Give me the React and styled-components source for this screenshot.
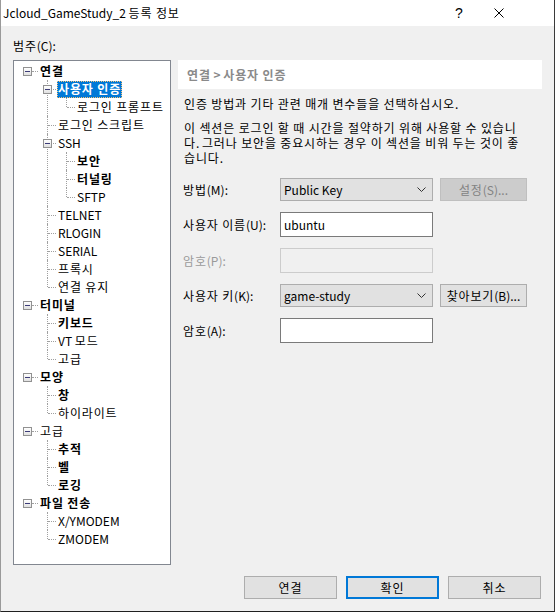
import React from 'react';
import styled, { createGlobalStyle } from 'styled-components';

const GlobalStyle = createGlobalStyle`
  html, body {
    margin: 0;
    padding: 0;
    background: #ffffff;
  }
  body {
    font-family: "Noto Sans CJK KR", "Noto Sans", sans-serif;
    font-size: 12px;
    color: #000;
  }
  * {
    box-sizing: border-box;
  }
`;

// Hangul runs get a little tracking so the widths come close to Malgun Gothic
const Han = styled.span`
  letter-spacing: 0.85px;
`;

const k = (text) =>
  text
    .split(/([가-힣]+(?:\s+[가-힣]+)*)/)
    .filter(Boolean)
    .map((part, i) => (/[가-힣]/.test(part) ? <Han key={i}>{part}</Han> : part));

const tree = [
  {
    label: '연결',
    bold: true,
    children: [
      { label: '사용자 인증', bold: true, selected: true, children: [{ label: '로그인 프롬프트' }] },
      { label: '로그인 스크립트' },
      {
        label: 'SSH',
        children: [{ label: '보안', bold: true }, { label: '터널링', bold: true }, { label: 'SFTP' }],
      },
      { label: 'TELNET' },
      { label: 'RLOGIN' },
      { label: 'SERIAL' },
      { label: '프록시' },
      { label: '연결 유지' },
    ],
  },
  {
    label: '터미널',
    bold: true,
    children: [{ label: '키보드', bold: true }, { label: 'VT 모드' }, { label: '고급' }],
  },
  {
    label: '모양',
    bold: true,
    children: [{ label: '창', bold: true }, { label: '하이라이트' }],
  },
  {
    label: '고급',
    children: [{ label: '추적', bold: true }, { label: '벨', bold: true }, { label: '로깅', bold: true }],
  },
  {
    label: '파일 전송',
    bold: true,
    children: [{ label: 'X/YMODEM' }, { label: 'ZMODEM' }],
  },
];

const Chevron = () => (
  <svg width="9" height="6" viewBox="0 0 9 6">
    <polyline points="0.5,0.5 4.5,4.5 8.5,0.5" fill="none" stroke="#333" strokeWidth="1" />
  </svg>
);

const Node = ({ node, level, last }) => {
  const hasChildren = node.children && node.children.length > 0;
  return (
    <TreeItem $level={level} $last={last}>
      <Row $level={level}>
        {hasChildren && (
          <Expander $level={level}>
            <Minus />
          </Expander>
        )}
        <NodeLabel $bold={node.bold} $selected={node.selected}>
          {k(node.label)}
        </NodeLabel>
      </Row>
      {hasChildren && (
        <SubList $level={level}>
          {node.children.map((c, i) => (
            <Node key={c.label} node={c} level={level + 1} last={i === node.children.length - 1} />
          ))}
        </SubList>
      )}
    </TreeItem>
  );
};

const App = () => {
  return (
    <>
      <GlobalStyle />
      <Window>
        <TitleBar>
          <Title>{k('Jcloud_GameStudy_2 등록 정보')}</Title>
          <CaptionButtons>
            <CaptionButton>?</CaptionButton>
            <CaptionButton>
              <svg width="10" height="10" viewBox="0 0 10 10">
                <path d="M0.5 0.5 L9.5 9.5 M9.5 0.5 L0.5 9.5" stroke="#000" strokeWidth="1" />
              </svg>
            </CaptionButton>
          </CaptionButtons>
        </TitleBar>

        <Body>
          <LeftColumn>
            <CategoryLabel>{k('범주(C):')}</CategoryLabel>
            <TreeBox>
              <TreeRoot>
                {tree.map((n) => (
                  <Node key={n.label} node={n} level={0} />
                ))}
              </TreeRoot>
            </TreeBox>
          </LeftColumn>

          <RightColumn>
            <Header>{k('연결 > 사용자 인증')}</Header>
            <Desc>{k('인증 방법과 기타 관련 매개 변수들을 선택하십시오.')}</Desc>
            <Para>
              {k('이 섹션은 로그인 할 때 시간을 절약하기 위해 사용할 수 있습니')}
              <br />
              {k('다. 그러나 보안을 중요시하는 경우 이 섹션을 비워 두는 것이 좋')}
              <br />
              {k('습니다.')}
            </Para>

            <Form>
              <FieldLabel>{k('방법(M):')}</FieldLabel>
              <Combo>
                <span>Public Key</span>
                <Chevron />
              </Combo>
              <PushButton disabled>{k('설정(S)...')}</PushButton>

              <FieldLabel>{k('사용자 이름(U):')}</FieldLabel>
              <TextBox defaultValue="ubuntu" />
              <span />

              <FieldLabel $disabled>{k('암호(P):')}</FieldLabel>
              <TextBox disabled />
              <span />

              <FieldLabel>{k('사용자 키(K):')}</FieldLabel>
              <Combo>
                <span>game-study</span>
                <Chevron />
              </Combo>
              <PushButton>{k('찾아보기(B)...')}</PushButton>

              <FieldLabel>{k('암호(A):')}</FieldLabel>
              <TextBox type="password" />
              <span />
            </Form>
          </RightColumn>
        </Body>

        <Footer>
          <DialogButton>{k('연결')}</DialogButton>
          <DialogButton $default>{k('확인')}</DialogButton>
          <DialogButton>{k('취소')}</DialogButton>
        </Footer>
      </Window>
    </>
  );
};

const Window = styled.div`
  width: 555px;
  height: 612px;
  display: flex;
  flex-direction: column;
  background: #f0f0f0;
  border-left: 1px solid #9a9a9a;
  border-right: 1px solid #3a3a3a;
  border-bottom: 1px solid #1f1f1f;
`;

const TitleBar = styled.div`
  height: 26px;
  flex: none;
  display: flex;
  align-items: center;
  background: #ffffff;
`;

const Title = styled.div`
  flex: 1;
  padding-left: 2px;
  font-size: 12px;
  line-height: 16px;
  white-space: nowrap;
`;

const CaptionButtons = styled.div`
  display: flex;
  padding-right: 35px;
`;

const CaptionButton = styled.div`
  width: 40px;
  height: 26px;
  display: flex;
  align-items: center;
  justify-content: center;
  font-family: "Liberation Sans", sans-serif;
  font-size: 14px;
`;

const Body = styled.div`
  flex: 1;
  display: grid;
  grid-template-columns: 158px 364px;
  column-gap: 7px;
  padding: 0 12px;
  min-height: 0;
`;

const LeftColumn = styled.div`
  display: flex;
  flex-direction: column;
`;

const CategoryLabel = styled.div`
  height: 34px;
  padding-top: 12px;
  line-height: 16px;
`;

const TreeBox = styled.div`
  height: 505px;
  border: 1px solid #828790;
  background: #ffffff;
  overflow: hidden;
`;

const TreeRoot = styled.ul`
  list-style: none;
  margin: 0;
  padding: 1px 0 0 0;
`;

const TreeItem = styled.li`
  position: relative;
  ${(p) =>
    p.$level > 0 &&
    `
    &::before {
      content: '';
      position: absolute;
      left: 0;
      top: 0;
      height: ${p.$last ? '9px' : '100%'};
      border-left: 1px dotted #a0a0a0;
    }
  `}
`;

const Row = styled.div`
  position: relative;
  height: 18px;
  display: flex;
  align-items: center;
  white-space: nowrap;
  padding-left: ${(p) => (p.$level === 0 ? '25px' : '10px')};
  &::before {
    content: '';
    position: absolute;
    top: 9px;
    left: ${(p) => (p.$level === 0 ? '18px' : '1px')};
    width: ${(p) => (p.$level === 0 ? '6px' : '8px')};
    border-top: 1px dotted #a0a0a0;
  }
`;

const Expander = styled.span`
  position: absolute;
  z-index: 1;
  top: 5px;
  left: ${(p) => (p.$level === 0 ? '9px' : '-4px')};
  width: 9px;
  height: 9px;
  border: 1px solid #919191;
  background: linear-gradient(#ffffff, #e0e0e0);
  display: flex;
  align-items: center;
  justify-content: center;
`;

const Minus = styled.span`
  width: 5px;
  height: 1px;
  background: #3c3c78;
`;

const NodeLabel = styled.span`
  display: inline-block;
  height: 17px;
  line-height: 16px;
  padding: 0 1px;
  font-weight: ${(p) => (p.$bold ? 700 : 400)};
  color: ${(p) => (p.$selected ? '#ffffff' : '#000000')};
  background: ${(p) => (p.$selected ? '#0078d7' : 'transparent')};
  outline: ${(p) => (p.$selected ? '1px dotted #f5c27a' : 'none')};
  outline-offset: -1px;
`;

const SubList = styled.ul`
  list-style: none;
  margin: 0;
  padding: 0;
  margin-left: ${(p) => (p.$level === 0 ? '33px' : '19px')};
`;

const RightColumn = styled.div`
  padding-top: 34px;
  display: flex;
  flex-direction: column;
  min-width: 0;
`;

const Header = styled.div`
  height: 29px;
  background: #ffffff;
  padding-left: 9px;
  line-height: 29px;
  font-weight: 700;
  color: #8a8a8a;
`;

const Desc = styled.div`
  margin-top: 7px;
  padding-left: 6px;
  line-height: 16px;
  white-space: nowrap;
`;

const Para = styled.div`
  margin-top: 8px;
  padding-left: 6px;
  line-height: 15px;
  white-space: nowrap;
`;

const Form = styled.div`
  margin-top: 13px;
  padding-left: 5px;
  display: grid;
  grid-template-columns: 90px 153px 87px;
  column-gap: 7px;
  row-gap: 11px;
  align-items: center;
`;

const FieldLabel = styled.div`
  line-height: 16px;
  white-space: nowrap;
  color: ${(p) => (p.$disabled ? '#9a9a9a' : '#000000')};
`;

const Combo = styled.div`
  height: 23px;
  border: 1px solid #adadad;
  background: #e1e1e1;
  display: flex;
  align-items: center;
  justify-content: space-between;
  padding: 0 6px 0 3px;
  line-height: 16px;
`;

const TextBox = styled.input`
  height: 25px;
  width: 100%;
  border: 1px solid ${(p) => (p.disabled ? '#cccccc' : '#7a7a7a')};
  background: ${(p) => (p.disabled ? '#f0f0f0' : '#ffffff')};
  padding: 0 3px;
  margin: 0;
  font: inherit;
  color: #000;
  outline: none;
`;

const PushButton = styled.button`
  height: 23px;
  margin: 0;
  padding: 0;
  font: inherit;
  border: 1px solid ${(p) => (p.disabled ? '#bfbfbf' : '#adadad')};
  background: ${(p) => (p.disabled ? '#cccccc' : '#e1e1e1')};
  color: ${(p) => (p.disabled ? '#838383' : '#000000')};
`;

const Footer = styled.div`
  flex: none;
  display: flex;
  justify-content: flex-end;
  gap: 9px;
  padding: 11px 13px 12px 0;
`;

const DialogButton = styled.button`
  width: 93px;
  height: 23px;
  margin: 0;
  padding: 0;
  font: inherit;
  color: #000;
  background: #e1e1e1;
  border: ${(p) => (p.$default ? '2px solid #0078d7' : '1px solid #adadad')};
`;

export default App;
